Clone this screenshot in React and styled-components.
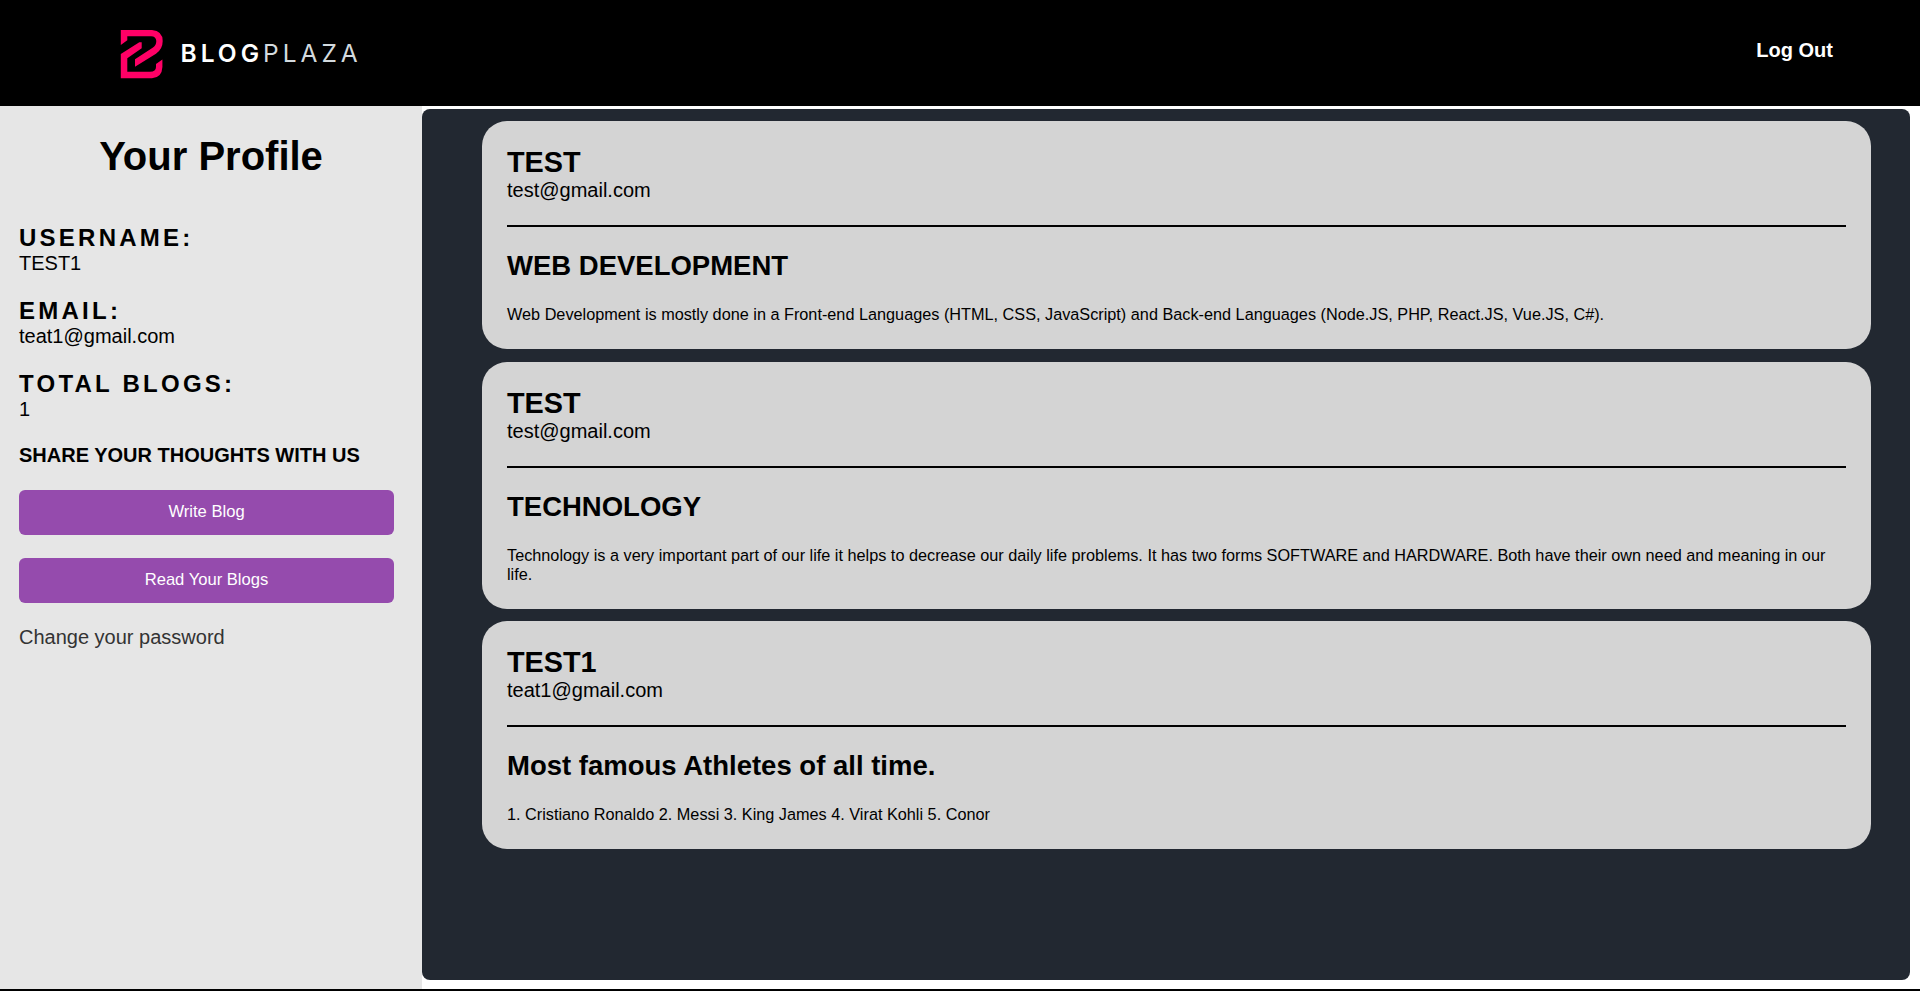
import React from "react";
import styled, { createGlobalStyle } from "styled-components";

const GlobalStyle = createGlobalStyle`
  * { box-sizing: border-box; margin: 0; padding: 0; }
  body { background: #fff; color: #000; font-family: "Liberation Sans", Arial, sans-serif; }
`;

const Page = styled.div`
  display: flex;
  flex-direction: column;
  height: 991px;
  overflow: hidden;
  border-bottom: 2px solid #000;
`;

const Header = styled.header`
  display: flex;
  justify-content: space-between;
  align-items: flex-start;
  height: 106px;
  flex-shrink: 0;
  padding: 29px 87px 0 120px;
  background: #000;
`;

const Brand = styled.div`
  display: flex;
  align-items: flex-start;
`;

const BrandMark = styled.svg`
  width: 44px;
  height: 50px;
`;

const BrandName = styled.div`
  display: flex;
  margin: 9px 0 0 16.5px;
  font: 400 24.5px/30px Inter, sans-serif;
`;

const BrandPart = styled.span`
  font-weight: ${(p) => (p.$strong ? 600 : 400)};
  letter-spacing: ${(p) => (p.$strong ? "4px" : "4px")};
  color: ${(p) => (p.$strong ? "#fff" : "#d3dade")};
`;

const LogOut = styled.a`
  padding-top: 10px;
  font-size: 20px;
  line-height: 23px;
  font-weight: 700;
  color: #fff;
`;

const Body = styled.div`
  display: flex;
  flex: 1;
  min-height: 0;
`;

const Sidebar = styled.aside`
  width: 422px;
  flex-shrink: 0;
  padding: 27px 28px 0 19px;
  background: #e6e6e6;
`;

const ProfileTitle = styled.h1`
  margin: 0 -9px 45px 0;
  font-size: 40px;
  line-height: 46px;
  text-align: center;
`;

const Field = styled.div`
  margin-bottom: 22px;
`;

const FieldLabel = styled.h2`
  font-size: 24px;
  line-height: 28px;
  letter-spacing: 3.25px;
`;

const FieldValue = styled.p`
  font-size: 20px;
  line-height: 23px;
`;

const Prompt = styled.h3`
  margin: 23px 0;
  font-size: 20px;
  line-height: 23px;
  white-space: nowrap;
`;

const Button = styled.button`
  display: block;
  width: 375px;
  height: 45px;
  margin-bottom: 23px;
  padding-bottom: 2px;
  border: 0;
  border-radius: 6px;
  background: #954bad;
  color: #fff;
  font: 16.6px/19px "Liberation Sans", Arial, sans-serif;
`;

const PasswordLink = styled.a`
  display: block;
  font-size: 20px;
  line-height: 23px;
  color: #333;
`;

const Feed = styled.main`
  display: flex;
  flex-direction: column;
  flex: 1;
  gap: 12.5px;
  margin: 3px 10px 9px 0;
  padding: 12px 39px 0 60px;
  border-radius: 8px;
  background: #222831;
`;

const Card = styled.article`
  padding: 25px 25px 25.3px;
  border-radius: 25px;
  background: #d4d4d4;
`;

const Author = styled.h2`
  margin-bottom: 1px;
  font-size: 28.8px;
  line-height: 32px;
`;

const AuthorEmail = styled.p`
  padding-bottom: 23px;
  border-bottom: 2px solid #000;
  font-size: 20px;
  line-height: 23px;
`;

const PostTitle = styled.h2`
  margin: 23px 0 24.1px;
  font-size: 27.5px;
  line-height: 31px;
`;

const PostText = styled.p`
  font-size: 16.25px;
  line-height: 18.8px;
`;

const fields = [
  ["USERNAME:", "TEST1"],
  ["EMAIL:", "teat1@gmail.com"],
  ["TOTAL BLOGS:", "1"],
];

const posts = [
  {
    author: "TEST",
    email: "test@gmail.com",
    title: "WEB DEVELOPMENT",
    text: "Web Development is mostly done in a Front-end Languages (HTML, CSS, JavaScript) and Back-end Languages (Node.JS, PHP, React.JS, Vue.JS, C#).",
  },
  {
    author: "TEST",
    email: "test@gmail.com",
    title: "TECHNOLOGY",
    text: "Technology is a very important part of our life it helps to decrease our daily life problems. It has two forms SOFTWARE and HARDWARE. Both have their own need and meaning in our life.",
  },
  {
    author: "TEST1",
    email: "teat1@gmail.com",
    title: "Most famous Athletes of all time.",
    text: "1. Cristiano Ronaldo 2. Messi 3. King James 4. Virat Kohli 5. Conor",
  },
];

export default function App() {
  return (
    <>
      <GlobalStyle />
      <Page>
        <Header>
          <Brand>
            <BrandMark viewBox="0 0 44 50" fill="#ff0066">
              <path d="M.8 1H32Q42.7 2 42.7 12Q42.7 20 36 24.8L15 37.7V30.3L33 18.5Q36.3 16 36.3 12Q36 7.2 31 7.2H7.3V11.2L.8 16Z" />
              <path d="M19.3 13.3H21.7V19.3L7.3 29.3V42.7H30Q36 42.7 36 38V35L42.4 30.5V38Q42 48.5 32 49.3H.8V25Z" />
            </BrandMark>
            <BrandName>
              <BrandPart $strong>BLOG</BrandPart>
              <BrandPart>PLAZA</BrandPart>
            </BrandName>
          </Brand>
          <LogOut>Log Out</LogOut>
        </Header>
        <Body>
          <Sidebar>
            <ProfileTitle>Your Profile</ProfileTitle>
            {fields.map(([label, value]) => (
              <Field key={label}>
                <FieldLabel>{label}</FieldLabel>
                <FieldValue>{value}</FieldValue>
              </Field>
            ))}
            <Prompt>SHARE YOUR THOUGHTS WITH US</Prompt>
            <Button>Write Blog</Button>
            <Button>Read Your Blogs</Button>
            <PasswordLink>Change your password</PasswordLink>
          </Sidebar>
          <Feed>
            {posts.map((post) => (
              <Card key={post.title}>
                <Author>{post.author}</Author>
                <AuthorEmail>{post.email}</AuthorEmail>
                <PostTitle>{post.title}</PostTitle>
                <PostText>{post.text}</PostText>
              </Card>
            ))}
          </Feed>
        </Body>
      </Page>
    </>
  );
}
